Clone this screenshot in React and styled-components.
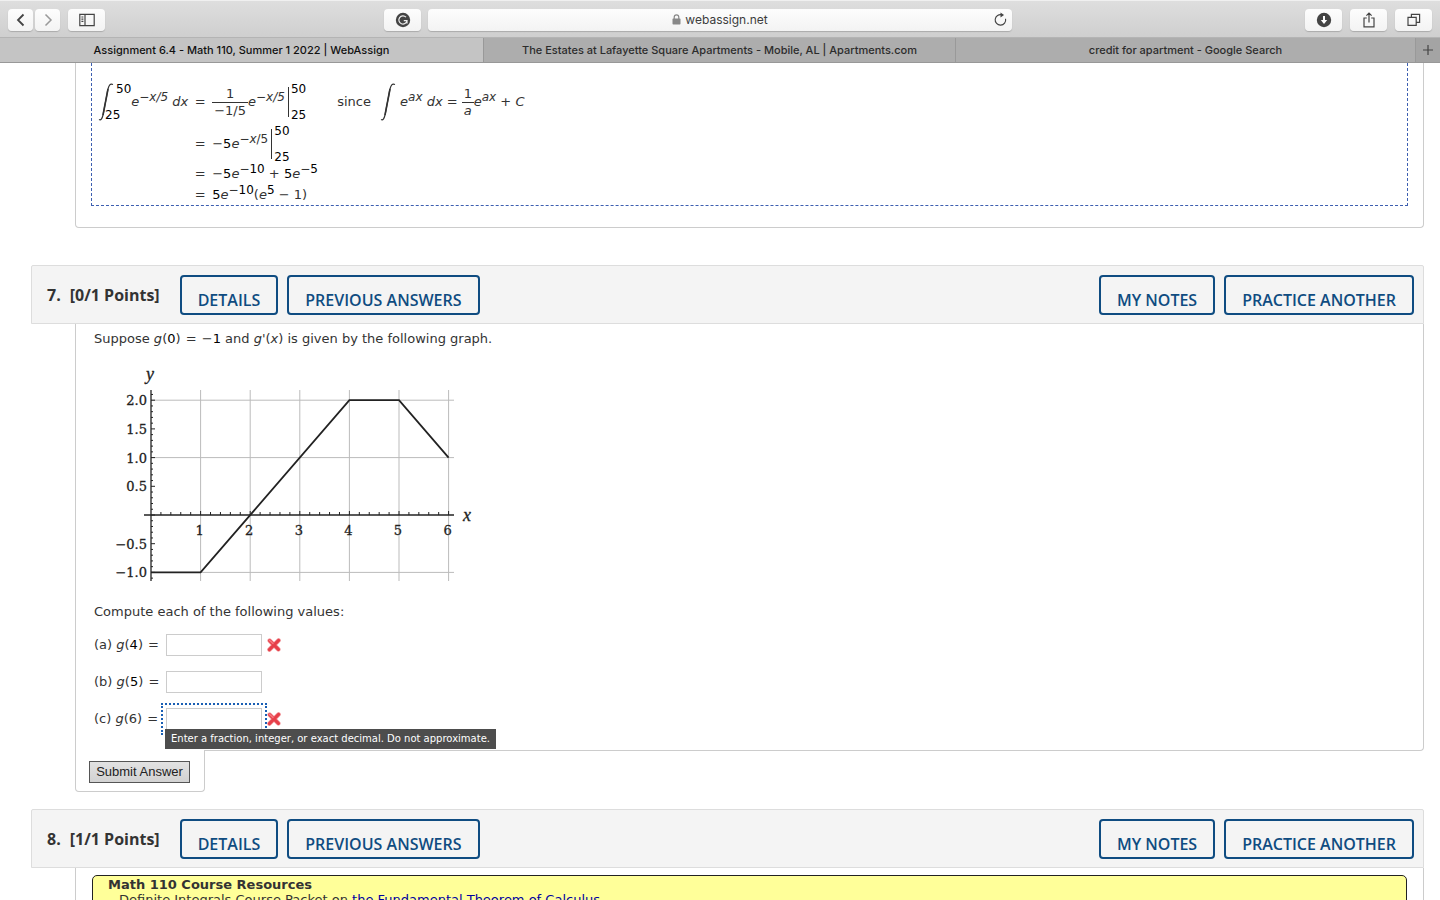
import React from 'react';
import styled, { createGlobalStyle } from 'styled-components';

const GlobalStyle = createGlobalStyle`
  * {
    box-sizing: border-box;
  }

  body {
    margin: 0;
    background: white;
    color: #333;
    font-family: 'DejaVu Sans', Verdana, sans-serif;
    font-size: 13px;
    line-height: 20px;
  }

  button, input {
    font: inherit;
    color: inherit;
  }
`;

const Window = styled.div`
  display: flex;
  flex-direction: column;
  height: 100vh;
  overflow: hidden;
`;

const Toolbar = styled.header`
  display: grid;
  grid-template-columns: 1fr minmax(200px, 584px) 1fr;
  gap: 7px;
  align-items: center;
  flex: none;
  height: 38px;
  padding: 1px 8px 0;
  border-top: 1px solid #f0f0f0;
  border-bottom: 1px solid #b4b4b4;
  background: linear-gradient(#dedede, #cfcfcf);
`;

const ToolGroup = styled.div`
  display: flex;
  gap: ${({ $gap }) => $gap || 8}px;
  justify-content: ${({ $end }) => ($end ? 'flex-end' : 'flex-start')};
`;

const Spacer = styled.div`
  flex: 1;
`;

const ToolButton = styled.button`
  display: flex;
  align-items: center;
  justify-content: center;
  width: ${({ $small }) => ($small ? 25 : 37)}px;
  height: 22px;
  padding: 0;
  border: 0;
  border-radius: 4px;
  background: linear-gradient(#fdfdfd, #f3f3f3);
  box-shadow: 0 1px 1px #aaa;
`;

const Address = styled.div`
  display: grid;
  grid-template-columns: 24px 1fr 24px;
  align-items: center;
  height: 22px;
  border-radius: 4px;
  background: linear-gradient(#fdfdfd, #f3f3f3);
  box-shadow: 0 1px 1px #aaa;
  color: #3c3c3c;
  font-family: Inter, sans-serif;
  font-size: 12px;
`;

const Site = styled.span`
  display: flex;
  align-items: center;
  justify-content: center;
  gap: 4px;
  grid-column: 2;
`;

const ReloadButton = styled.button`
  display: flex;
  justify-self: center;
  padding: 0;
  border: 0;
  background: none;
`;

const TabBar = styled.nav`
  display: flex;
  flex: none;
  height: 25px;
  border-bottom: 1px solid #989898;
  background: #acacac;
  font-family: Inter, sans-serif;
  font-size: 11px;
  font-weight: 500;
`;

const Tab = styled.a`
  flex: ${({ $grow }) => $grow} 1 0;
  overflow: hidden;
  border-right: 1px solid #999;
  background: ${({ $active }) => ($active ? '#c4c4c4' : '#adadad')};
  color: ${({ $active }) => ($active ? '#111' : '#2c2c2c')};
  line-height: 24px;
  text-align: center;
  text-decoration: none;
  white-space: nowrap;
`;

const NewTab = styled.button`
  display: flex;
  align-items: center;
  justify-content: center;
  width: 24px;
  padding: 0;
  border: 0;
  background: #a4a4a4;
`;

const Page = styled.main`
  flex: 1;
  min-height: 0;
  overflow: hidden;
  padding: 0 16px 0 31px;
`;

const Panel = styled.div`
  margin-left: 44px;
  padding: ${({ $padding }) => $padding};
  border: 1px solid #ccc;
  border-top: 0;
  border-radius: ${({ $footer }) => ($footer ? '0 0 4px 0' : '0 0 4px 4px')};
`;

const Solution = styled.div`
  padding: 17px 6px 0;
  border-color: #3d5fb0;
  border-style: dashed;
  border-width: 0 1px 1px;
`;

const Steps = styled.div`
  display: grid;
  grid-template-columns: max-content 24px 1fr;
  grid-template-rows: 44px 40px 20px 21px;
  align-items: center;
  white-space: pre;
`;

const Equals = styled.span`
  grid-column: 2;
  text-align: center;
`;

const Expr = styled.span`
  display: flex;
  align-items: center;
`;

const Since = styled.span`
  display: flex;
  align-items: center;
  gap: 9px;
  margin-left: 31px;
`;

const Sup = styled.sup`
  position: relative;
  top: -5px;
  font-size: 12px;
  line-height: 0;
  vertical-align: baseline;
`;

const Num = styled.span`
  color: black;
`;

const Op = styled.span`
  margin: 0 1px;
`;

const Fraction = styled.span`
  display: flex;
  flex-direction: column;
  align-items: center;
  line-height: 16px;
`;

const Numerator = styled.span`
  align-self: stretch;
  border-bottom: 1px solid #333;
  text-align: center;
`;

const Denominator = styled.span`
  padding: 0 2px;
`;

const Limits = styled.span`
  display: flex;
  flex-direction: column;
  justify-content: space-between;
  height: 40px;
  padding-left: 2px;
  color: black;
  font-size: 12px;
  line-height: 14px;
`;

const LowerLimit = styled.span`
  margin-left: ${({ $tuck }) => ($tuck ? -11 : 0)}px;
`;

const Bar = styled.span`
  height: 30px;
  margin-left: 3px;
  border-left: 1px solid #333;
`;

const QuestionHeader = styled.div`
  display: flex;
  flex-wrap: wrap;
  align-items: center;
  gap: 9px;
  min-height: 59px;
  margin-top: ${({ $top }) => $top}px;
  padding: 8px 9px 8px 15px;
  border: 1px solid #ddd;
  border-radius: 2px 2px 0 0;
  background: #f4f4f4;
  font-family: 'Open Sans', sans-serif;
`;

const Points = styled.h2`
  display: flex;
  gap: 9px;
  margin: 0 11px 0 0;
  font-size: 16px;
  font-weight: 700;
`;

const OutlineButton = styled.button`
  height: 40px;
  padding: 10px 16px 0;
  border: 2px solid #0f4c81;
  border-radius: 4px;
  background: transparent;
  color: #0f4c81;
  font-size: 16px;
  font-weight: 600;
  text-transform: uppercase;
`;

const Text = styled.p`
  margin: 0;
`;

const Chart = styled.svg`
  display: block;
  width: 400px;
  height: 236px;
  margin: 8px 0 9px;
`;

const AxisText = styled.text`
  fill: #222;
  stroke: #222;
  stroke-width: 0.3px;
  font-family: 'DejaVu Serif', serif;
  font-size: 13px;
  text-anchor: ${({ $anchor }) => $anchor};
`;

const AxisName = styled.text`
  fill: #222;
  stroke: #222;
  stroke-width: 0.3px;
  font-family: 'Liberation Serif', serif;
  font-size: 18px;
  font-style: italic;
  text-anchor: middle;
`;

const Answers = styled.div`
  display: grid;
  gap: 15px;
  margin-top: 12px;
`;

const AnswerRow = styled.div`
  position: relative;
  display: flex;
  align-items: center;
  gap: 5px;
  height: 22px;
`;

const AnswerLabel = styled.label`
  width: 67px;
  white-space: nowrap;
`;

const AnswerInput = styled.input`
  width: 96px;
  height: 22px;
  padding: 0 4px;
  border: 1px solid #ccc;
  background: white;
  outline: ${({ $focused }) => ($focused ? '2px dotted #1a5fb4' : 'none')};
  outline-offset: 3px;
`;

const Tooltip = styled.div`
  position: absolute;
  top: 21px;
  left: 71px;
  z-index: 2;
  padding: 0 6px;
  background: #4d4d4d;
  color: white;
  font-size: 10px;
  white-space: nowrap;
`;

const SubmitBox = styled.div`
  position: relative;
  width: 130px;
  height: 42px;
  margin: -1px 0 0 44px;
  padding: 11px 13px 8px;
  border: 1px solid #ccc;
  border-top: 0;
  border-radius: 0 0 4px 4px;
  background: white;
`;

const SubmitButton = styled.button`
  width: 101px;
  height: 22px;
  padding: 0;
  border: 1px solid #555;
  background: linear-gradient(#e2e2e2, #d2d2d2);
  color: #222;
  font-family: 'Liberation Sans', Arial, sans-serif;
  white-space: nowrap;
`;

const Resources = styled.section`
  padding: 1px 15px 20px;
  border: 1px solid #222;
  border-radius: 5px;
  background: #ffff99;
  line-height: 16px;
`;

const ResourcesTitle = styled.h3`
  margin: 0;
  font-size: 13px;
`;

const ResourceItem = styled.p`
  margin: 0;
  padding-left: 11px;
  line-height: 14px;
`;

const ResourceLink = styled.a`
  color: #0000a0;
  text-decoration: none;
`;

const Icon = ({ children, size = 16, color = '#444', width = 1.2 }) => (
  <svg
    width={size}
    height={size}
    viewBox="0 0 16 16"
    fill="none"
    stroke={color}
    strokeWidth={width}
    aria-hidden="true"
  >
    {children}
  </svg>
);

const Integral = () => (
  <svg width="16" height="38" viewBox="0 0 16 38" fill="none" stroke="#333" aria-hidden="true">
    <path d="M1 36.5C3 37.5 4 36 5 32L10 6C11 2 12 .5 15 1.5" strokeWidth="1.2" />
    <path d="M5 32L10 6" strokeWidth="1.6" />
  </svg>
);

const WrongMark = () => (
  <svg width="14" height="14" viewBox="0 0 14 14" role="img" aria-label="Incorrect">
    <path d="M2.6 2.6L11.4 11.4M11.6 2.4L2.4 11.6" stroke="#f3a0a4" strokeWidth="4.4" strokeLinecap="round" />
    <path d="M2.6 2.6L11.4 11.4M11.6 2.4L2.4 11.6" stroke="#e63f49" strokeWidth="3.2" strokeLinecap="round" />
    <path d="M2.4 2.2L6 5.6" stroke="#f77a80" strokeWidth="1.4" strokeLinecap="round" />
  </svg>
);

const Evaluated = ({ from, to }) => (
  <>
    <Bar />
    <Limits>
      <span>{to}</span>
      <LowerLimit>{from}</LowerLimit>
    </Limits>
  </>
);

const X0 = 57;
const Y0 = 158;
const toX = (v) => X0 + v * 49.6;
const toY = (v) => Y0 - v * 57.4;
const range = (from, to) => Array.from({ length: to - from + 1 }, (_, i) => from + i);

const points = [[0, -1], [1, -1], [4, 2], [5, 2], [6, 1]];
const yLabels = [2, 1.5, 1, 0.5, -0.5, -1];

const Graph = () => (
  <Chart viewBox="0 0 400 236" role="img" aria-label="Graph of the derivative of g">
    <g stroke="#bbb">
      {range(1, 6).map((x) => (
        <line key={x} x1={toX(x)} x2={toX(x)} y1={33} y2={224} />
      ))}
      {[2, 1, -1].map((y) => (
        <line key={y} x1={X0} x2={360} y1={toY(y)} y2={toY(y)} />
      ))}
    </g>
    <g stroke="#222">
      <line x1={X0} x2={X0} y1={33} y2={224} strokeWidth="1.3" />
      <line x1={50} x2={360} y1={Y0} y2={Y0} strokeWidth="1.3" />
      {range(1, 30).map((i) => (
        <line key={i} x1={toX(i / 5)} x2={toX(i / 5)} y1={Y0} y2={Y0 - (i % 5 ? 3 : 4)} />
      ))}
      {range(-11, 21).map((i) => (
        <line key={i} x1={X0} x2={X0 + (i % 5 ? 2 : 4)} y1={toY(i / 10)} y2={toY(i / 10)} />
      ))}
    </g>
    <polyline
      points={points.map(([x, y]) => `${toX(x)},${toY(y)}`).join(' ')}
      fill="none"
      stroke="#222"
      strokeWidth="1.8"
    />
    {yLabels.map((y) => (
      <AxisText key={y} $anchor="end" x={53} y={toY(y) + 5}>
        {y.toFixed(1).replace('-', '−')}
      </AxisText>
    ))}
    {range(1, 6).map((x) => (
      <AxisText key={x} $anchor="middle" x={toX(x) - 1} y={Y0 + 20}>{x}</AxisText>
    ))}
    <AxisName x={56} y={23}>y</AxisName>
    <AxisName x={373} y={Y0 + 6}>x</AxisName>
  </Chart>
);

const Question = ({ number, points: score, top }) => (
  <QuestionHeader $top={top}>
    <Points>
      <span>{number}.</span>
      <span>[{score} Points]</span>
    </Points>
    <OutlineButton>Details</OutlineButton>
    <OutlineButton>Previous Answers</OutlineButton>
    <Spacer />
    <OutlineButton>My Notes</OutlineButton>
    <OutlineButton>Practice Another</OutlineButton>
  </QuestionHeader>
);

const Answer = ({ part, value, dark = true, wrong, focused, hint }) => (
  <AnswerRow>
    <AnswerLabel htmlFor={`answer-${part}`}>
      ({part}) <i>g</i>({dark ? <Num>{value}</Num> : value}) <Op>=</Op>
    </AnswerLabel>
    <AnswerInput id={`answer-${part}`} type="text" $focused={focused} />
    {wrong && <WrongMark />}
    {hint && <Tooltip role="tooltip">{hint}</Tooltip>}
  </AnswerRow>
);

const BrowserBar = () => (
  <>
    <Toolbar>
      <ToolGroup>
        <ToolGroup $gap={2}>
          <ToolButton $small aria-label="Back">
            <Icon width={1.8}><path d="M10.5 2.5L5 8l5.5 5.5" /></Icon>
          </ToolButton>
          <ToolButton $small aria-label="Forward">
            <Icon width={1.5} color="#999"><path d="M5.5 2.5L11 8l-5.5 5.5" /></Icon>
          </ToolButton>
        </ToolGroup>
        <ToolButton aria-label="Sidebar">
          <Icon>
            <path d="M.8 2.4h14.4v11.2H.8zM6 2.4v11.2M2.4 5h2M2.4 7.2h2M2.4 9.4h2" />
          </Icon>
        </ToolButton>
        <Spacer />
        <ToolButton aria-label="Grammarly">
          <Icon>
            <circle cx="8" cy="8" r="7.2" fill="#444" stroke="none" />
            <path d="M11 5.2A4.1 4.1 0 1 0 12 8.6H8.8M12 8.4v3" stroke="#eee" />
          </Icon>
        </ToolButton>
      </ToolGroup>
      <Address>
        <Site>
          <svg width="9" height="11" viewBox="0 0 9 11" aria-hidden="true">
            <path d="M2.2 5V3.2a2.3 2.3 0 0 1 4.6 0V5" fill="none" stroke="#888" strokeWidth="1.2" />
            <rect x=".5" y="4.6" width="8" height="6" rx=".8" fill="#888" />
          </svg>
          webassign.net
        </Site>
        <ReloadButton aria-label="Reload">
          <Icon size={15}>
            <path d="M9.5 3A5.6 5.6 0 1 0 13.4 7.2" />
            <path d="M8 .5L11.8 3.2 8 5.8z" fill="#444" stroke="none" />
          </Icon>
        </ReloadButton>
      </Address>
      <ToolGroup $end>
        <ToolButton aria-label="Downloads">
          <Icon>
            <circle cx="8" cy="8" r="7.2" fill="#444" stroke="none" />
            <path d="M8 4v5" stroke="#fff" strokeWidth="2" />
            <path d="M4.8 8h6.4L8 12z" fill="#fff" stroke="none" />
          </Icon>
        </ToolButton>
        <ToolButton aria-label="Share">
          <Icon>
            <path d="M5.8 6H3v8.8h10V6h-2.8M8 10.5V1.2M5.4 3.6L8 1l2.6 2.6" />
          </Icon>
        </ToolButton>
        <ToolButton aria-label="Show all tabs">
          <Icon>
            <path d="M2 5.4h8.2v8H2zM5.4 5.2V2.4h8.2v8h-3.2" />
          </Icon>
        </ToolButton>
      </ToolGroup>
    </Toolbar>
    <TabBar>
      <Tab href="#assignment" $grow={484} $active>Assignment 6.4 - Math 110, Summer 1 2022 | WebAssign</Tab>
      <Tab href="#estates" $grow={472}>The Estates at Lafayette Square Apartments - Mobile, AL | Apartments.com</Tab>
      <Tab href="#credit" $grow={460}>credit for apartment - Google Search</Tab>
      <NewTab aria-label="New tab">
        <Icon><path d="M8 3v10M3 8h10" /></Icon>
      </NewTab>
    </TabBar>
  </>
);

const SolutionSteps = () => (
  <Steps>
    <Expr>
      <Integral />
      <Limits>
        <span>50</span>
        <LowerLimit $tuck>25</LowerLimit>
      </Limits>
      <i>e<Sup>−x/5</Sup>{' dx'}</i>
    </Expr>
    <Equals>=</Equals>
    <Expr>
      <Fraction>
        <Numerator>1</Numerator>
        <Denominator>−1/5</Denominator>
      </Fraction>
      <i>e<Sup>−x/5</Sup></i>
      <Evaluated from={25} to={50} />
      <Since>
        since
        <Expr>
          <Integral />
          <i>{' e'}<Sup>ax</Sup>{' dx'}</i>
          {' = '}
          <Fraction>
            <Numerator>1</Numerator>
            <Denominator><i>a</i></Denominator>
          </Fraction>
          <span><i>e<Sup>ax</Sup></i> + <i>C</i></span>
        </Expr>
      </Since>
    </Expr>
    <Equals>=</Equals>
    <Expr>
      <span>−<Num>5</Num><i>e</i><Sup>−<i>x</i>/5</Sup></span>
      <Evaluated from={25} to={50} />
    </Expr>
    <Equals>=</Equals>
    <span>−<Num>5</Num><i>e</i><Sup>−<Num>10</Num></Sup> + <Num>5</Num><i>e</i><Sup>−<Num>5</Num></Sup></span>
    <Equals>=</Equals>
    <span><Num>5</Num><i>e</i><Sup>−<Num>10</Num></Sup>(<i>e</i><Sup><Num>5</Num></Sup> − 1)</span>
  </Steps>
);

const App = () => (
  <Window>
    <GlobalStyle />
    <BrowserBar />
    <Page>
      <Panel $padding="0 15px 21px">
        <Solution>
          <SolutionSteps />
        </Solution>
      </Panel>

      <Question number={7} points="0/1" top={37} />
      <Panel $padding="5px 18px 20px" $footer>
        <Text>
          Suppose <i>g</i>(<Num>0</Num>) <Op>=</Op> −<Num>1</Num> and <i>g</i>'(<i>x</i>) is given by the following graph.
        </Text>
        <Graph />
        <Text>Compute each of the following values:</Text>
        <Answers>
          <Answer part="a" value={4} wrong />
          <Answer part="b" value={5} />
          <Answer
            part="c"
            value={6}
            dark={false}
            wrong
            focused
            hint="Enter a fraction, integer, or exact decimal. Do not approximate."
          />
        </Answers>
      </Panel>
      <SubmitBox>
        <SubmitButton>Submit Answer</SubmitButton>
      </SubmitBox>

      <Question number={8} points="1/1" top={17} />
      <Panel $padding="7px 16px 20px 16px">
        <Resources>
          <ResourcesTitle>Math 110 Course Resources</ResourcesTitle>
          <ResourceItem>
            Definite Integrals Course Packet on{' '}
            <ResourceLink href="#calculus">the Fundamental Theorem of Calculus</ResourceLink>
          </ResourceItem>
        </Resources>
      </Panel>
    </Page>
  </Window>
);

export default App;
